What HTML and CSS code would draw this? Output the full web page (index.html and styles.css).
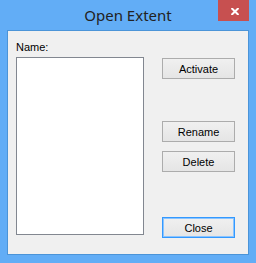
FILE: index.html
```html
<!DOCTYPE html>
<html lang="en">
<head>
    <meta charset="UTF-8">
    <title>Open Extent</title>
    <link rel="stylesheet" href="styles.css">
</head>
<body>
    <div class="window">
        <div class="titlebar">
            <span class="title">Open Extent</span>
            <button class="close-x" aria-label="Close">
                <svg width="8" height="7" viewBox="0 0 8 7">
                    <path d="M0.5 0 L7.5 7 M7.5 0 L0.5 7" stroke="#fff" stroke-width="2" fill="none"/>
                </svg>
            </button>
        </div>

        <div class="client">
            <div class="list-col">
                <label for="names">Name:</label>
                <div class="listbox" id="names"></div>
            </div>
            <div class="button-col">
                <button class="btn btn-activate">Activate</button>
                <button class="btn btn-rename">Rename</button>
                <button class="btn btn-delete">Delete</button>
                <button class="btn btn-close default">Close</button>
            </div>
        </div>
    </div>
</body>
</html>
```

FILE: styles.css
```css
/* General */
body {
    margin: 0;
    padding: 0;
    font-family: "Liberation Sans", Arial, sans-serif;
}

/* Window frame */
.window {
    width: 256px;
    height: 263px;
    box-sizing: border-box;
    background: #62adf6;
    padding: 0 7px 8px 7px;
    display: flex;
    flex-direction: column;
}

.titlebar {
    position: relative;
    height: 30px;
    display: flex;
    justify-content: center;
    align-items: flex-start;
}

.title {
    font-family: "Noto Sans", sans-serif;
    font-size: 15px;
    line-height: 20px;
    padding-top: 5px;
    color: #222;
}

.close-x {
    position: absolute;
    top: 0;
    right: 0;
    width: 31px;
    height: 21px;
    border: none;
    padding: 1px 0 0 3px;
    background: #c75050;
    display: flex;
    justify-content: center;
    align-items: center;
}

/* Client area */
.client {
    flex: 1;
    background: #f0f0f0;
    border: 1px solid #4b94d8;
    display: flex;
    gap: 18px;
    padding: 0 0 0 8px;
}

.list-col {
    display: flex;
    flex-direction: column;
    padding-top: 10px;
}

.list-col label {
    font-size: 11px;
    line-height: 13px;
    color: #000;
    margin-bottom: 3px;
}

.listbox {
    width: 126px;
    height: 176px;
    background: #fff;
    border: 1px solid #828790;
}

.button-col {
    display: flex;
    flex-direction: column;
    padding-top: 27px;
}

.btn {
    width: 73px;
    height: 21px;
    box-sizing: border-box;
    border: 1px solid #acacac;
    background: linear-gradient(#f0f0f0, #e5e5e5);
    font-family: "Liberation Sans", Arial, sans-serif;
    font-size: 11px;
    color: #000;
    padding: 0;
}

.btn-rename {
    margin-top: 42px;
}

.btn-delete {
    margin-top: 9px;
}

.btn-close {
    margin-top: 45px;
}

.btn.default {
    border-color: #3399ff;
    box-shadow: inset 0 0 0 1px #8ac4ff;
}
```
